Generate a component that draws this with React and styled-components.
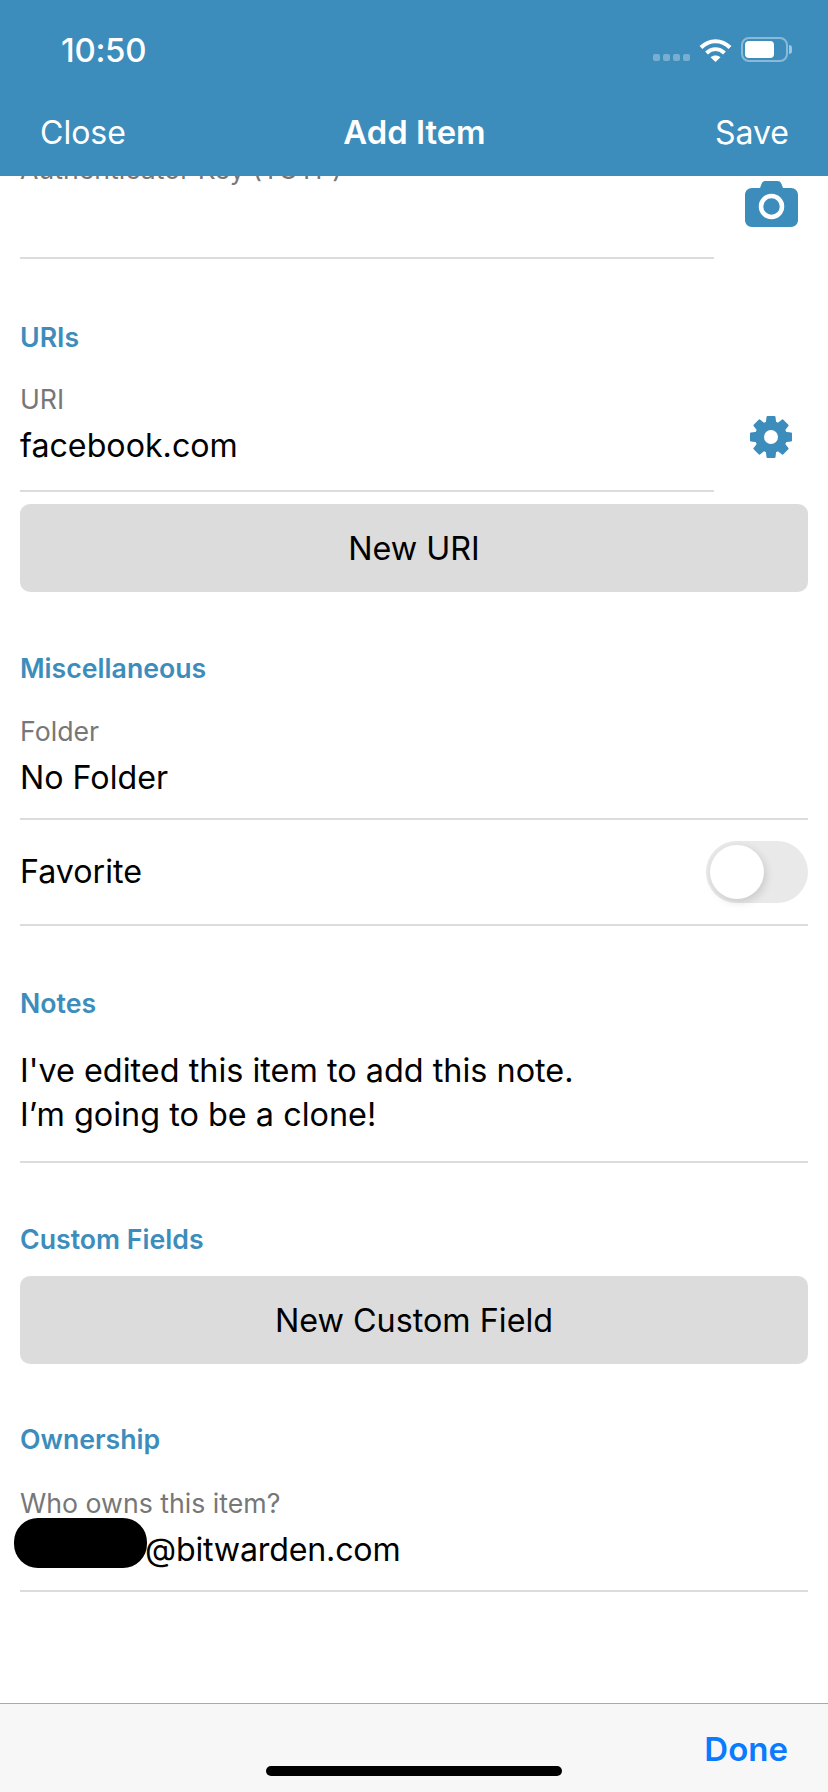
import styled, { createGlobalStyle } from "styled-components";

const GlobalStyle = createGlobalStyle`
  html, body {
    margin: 0;
    padding: 0;
    background: #fff;
  }
`;

const gearTeeth = [0, 45, 90, 135, 180, 225, 270, 315];

const Wifi = () => (
  <svg width="33" height="24" viewBox="0 0 33 24">
    <g fill="none" stroke="#fff" strokeWidth="4">
      <path d="M2 9.5C10.5 1 22.5 1 31 9.5" />
      <path d="M7.5 15C13 10 20 10 25.5 15" />
    </g>
    <path d="M11.5 19.2C14.5 16.8 18.5 16.8 21.5 19.2L16.5 24Z" fill="#fff" />
  </svg>
);

const Camera = () => (
  <svg width="53" height="46" viewBox="0 0 53 46">
    <path
      d="M7 7H15L16.5 3C17.2 1 18.5 0 20.500 0H32.500C34.500 0 35.800 1 36.500 3L38 7H46C50 7 53 10 53 14V39C53 43 50 46 46 46H7C3 46 0 43 0 39V14C0 10 3 7 7 7Z"
      fill="#3c8dbc"
    />
    <circle cx="26.500" cy="25.500" r="10.500" fill="none" stroke="#fff" strokeWidth="4.500" />
  </svg>
);

const Gear = () => (
  <svg width="44" height="44" viewBox="0 0 44 44">
    {gearTeeth.map((angle) => (
      <path
        key={angle}
        d="M17.500 10L18.500 2H25.500L26.500 10Z"
        fill="#3c8dbc"
        stroke="#3c8dbc"
        strokeWidth="2"
        strokeLinejoin="round"
        transform={`rotate(${angle} 22 22)`}
      />
    ))}
    <circle cx="22" cy="22" r="11.500" fill="none" stroke="#3c8dbc" strokeWidth="9" />
  </svg>
);

const App = () => {
  return (
    <Page>
      <GlobalStyle />
      <Header>
        <StatusBar>
          <Time>10:50</Time>
          <StatusIcons>
            <Signal>
              <SignalDot />
              <SignalDot />
              <SignalDot />
              <SignalDot />
            </Signal>
            <Wifi />
            <Battery>
              <BatteryFill />
            </Battery>
          </StatusIcons>
        </StatusBar>
        <NavBar>
          <NavAction>Close</NavAction>
          <NavTitle>Add Item</NavTitle>
          <NavAction $right>Save</NavAction>
        </NavBar>
      </Header>

      <Scroll>
        <Form>
          <FieldRow>
            <Field $short>
              <Label $scrolled>Authenticator Key (TOTP)</Label>
              <Value>&nbsp;</Value>
            </Field>
            <CameraSlot>
              <Camera />
            </CameraSlot>
          </FieldRow>

          <Heading>URIs</Heading>
          <FieldRow>
            <Field $short>
              <Label>URI</Label>
              <Value>facebook.com</Value>
            </Field>
            <GearSlot>
              <Gear />
            </GearSlot>
          </FieldRow>
          <Button>New URI</Button>

          <Heading $top={61} $bottom={33}>Miscellaneous</Heading>
          <Field>
            <Label>Folder</Label>
            <Value>No Folder</Value>
          </Field>
          <ToggleRow>
            <Value>Favorite</Value>
            <Toggle>
              <Thumb />
            </Toggle>
          </ToggleRow>

          <Heading $top={62}>Notes</Heading>
          <Notes>
            I've edited this item to add this note.
            <br />
            I’m going to be a clone!
          </Notes>

          <Heading $top={61} $bottom={10}>Custom Fields</Heading>
          <Button>New Custom Field</Button>

          <Heading $top={60} $bottom={34}>Ownership</Heading>
          <Field>
            <Label>Who owns this item?</Label>
            <Value $tight>
              <Redaction />
              @bitwarden.com
            </Value>
          </Field>
        </Form>
      </Scroll>

      <Footer>
        <Done>Done</Done>
        <HomeBar />
      </Footer>
    </Page>
  );
};

export default App;

const Page = styled.div`
  width: 828px;
  height: 1792px;
  display: flex;
  flex-direction: column;
  overflow: hidden;
  font-family: Inter, "Liberation Sans", sans-serif;
  color: #000;
`;

const Header = styled.header`
  flex: 0 0 176px;
  position: relative;
  z-index: 1;
  background: #3c8dbc;
  color: #fff;
`;

const StatusBar = styled.div`
  height: 100px;
  padding: 32px 40px 0 61px;
  box-sizing: border-box;
  display: flex;
  justify-content: space-between;
  align-items: flex-start;
`;

const Time = styled.div`
  font-size: 33px;
  font-weight: 500;
  line-height: 36px;
  letter-spacing: -0.3px;
`;

const StatusIcons = styled.div`
  display: flex;
  align-items: flex-end;
  margin-top: 5px;
  height: 25px;
`;

const Signal = styled.div`
  display: flex;
  gap: 3px;
  margin-right: 9px;
  margin-bottom: 1px;
`;

const SignalDot = styled.span`
  width: 7px;
  height: 7px;
  border-radius: 2px;
  background: rgba(255, 255, 255, 0.3);
`;

const Battery = styled.div`
  position: relative;
  width: 47px;
  height: 25px;
  margin-left: 9px;
  box-sizing: border-box;
  border: 2px solid rgba(255, 255, 255, 0.4);
  border-radius: 8px;
  padding: 2px;

  &::after {
    content: "";
    position: absolute;
    right: -6px;
    top: 6px;
    width: 3px;
    height: 9px;
    border-radius: 0 3px 3px 0;
    background: rgba(255, 255, 255, 0.5);
  }
`;

const BatteryFill = styled.div`
  width: 29px;
  height: 17px;
  border-radius: 4px;
  background: #fff;
`;

const NavBar = styled.nav`
  display: grid;
  grid-template-columns: 1fr auto 1fr;
  align-items: center;
  padding: 2px 39px 0 40px;
  height: 60px;
`;

const NavAction = styled.div`
  font-size: 32px;
  text-align: ${({ $right }) => ($right ? "right" : "left")};
`;

const NavTitle = styled.div`
  font-size: 32.8px;
  font-weight: 600;
`;

const Scroll = styled.main`
  flex: 1;
  overflow: hidden;
`;

const Form = styled.div`
  margin-top: -22px;
  padding: 0 20px;
  display: flex;
  flex-direction: column;
`;

const FieldRow = styled.div`
  display: flex;
  justify-content: space-between;
  align-items: flex-start;
`;

const Field = styled.div`
  width: ${({ $short }) => ($short ? "694px" : "100%")};
  padding-bottom: ${({ $short }) => ($short ? "22px" : "18px")};
  border-bottom: 2px solid #dcdcdc;
`;

const Label = styled.div`
  font-size: 26.7px;
  line-height: 30px;
  color: #777;
  margin-bottom: ${({ $scrolled }) => ($scrolled ? "7px" : "10px")};
`;

const Value = styled.div`
  display: flex;
  align-items: center;
  font-size: 32.2px;
  line-height: 44px;
  height: 44px;
  letter-spacing: ${({ $tight }) => ($tight ? "-0.2px" : "0")};
`;

const CameraSlot = styled.div`
  margin: 27px 10px 0 0;
  height: 46px;
`;

const GearSlot = styled.div`
  margin: 31px 15px 0 0;
  height: 44px;
`;

const Heading = styled.h2`
  margin: ${({ $top = 63 }) => $top}px 0 ${({ $bottom = 32 }) => $bottom}px;
  font-size: 26.7px;
  font-weight: 600;
  line-height: 30px;
  color: #3c8dbc;
`;

const Button = styled.div`
  height: 88px;
  margin-top: 12px;
  border-radius: 10px;
  background: #dcdcdc;
  display: flex;
  align-items: center;
  justify-content: center;
  font-size: 32.3px;
`;

const ToggleRow = styled.div`
  height: 106px;
  box-sizing: border-box;
  display: flex;
  align-items: center;
  justify-content: space-between;
  border-bottom: 2px solid #dcdcdc;
`;

const Toggle = styled.div`
  width: 102px;
  height: 62px;
  box-sizing: border-box;
  padding: 4px;
  border-radius: 31px;
  background: #e9e9ea;
`;

const Thumb = styled.div`
  width: 54px;
  height: 54px;
  border-radius: 50%;
  background: #fff;
  box-shadow: 2px 3px 8px rgba(0, 0, 0, 0.14);
`;

const Notes = styled.div`
  margin-top: -1px;
  padding-bottom: 24px;
  font-size: 32.4px;
  line-height: 44px;
  border-bottom: 2px solid #dcdcdc;
`;

const Redaction = styled.span`
  flex: none;
  width: 133px;
  height: 50px;
  margin: 0 -2px 14px -6px;
  border-radius: 24px;
  background: #000;
`;

const Footer = styled.footer`
  position: relative;
  flex: 0 0 89px;
  box-sizing: border-box;
  background: #f7f7f7;
  border-top: 1px solid #aaa;
  display: flex;
  justify-content: flex-end;
  padding: 25px 40px 0 0;
`;

const Done = styled.div`
  font-size: 33px;
  font-weight: 600;
  line-height: 40px;
  color: #0a7aff;
`;

const HomeBar = styled.div`
  position: absolute;
  left: 266px;
  bottom: 16px;
  width: 296px;
  height: 10px;
  border-radius: 5px;
  background: #000;
`;
